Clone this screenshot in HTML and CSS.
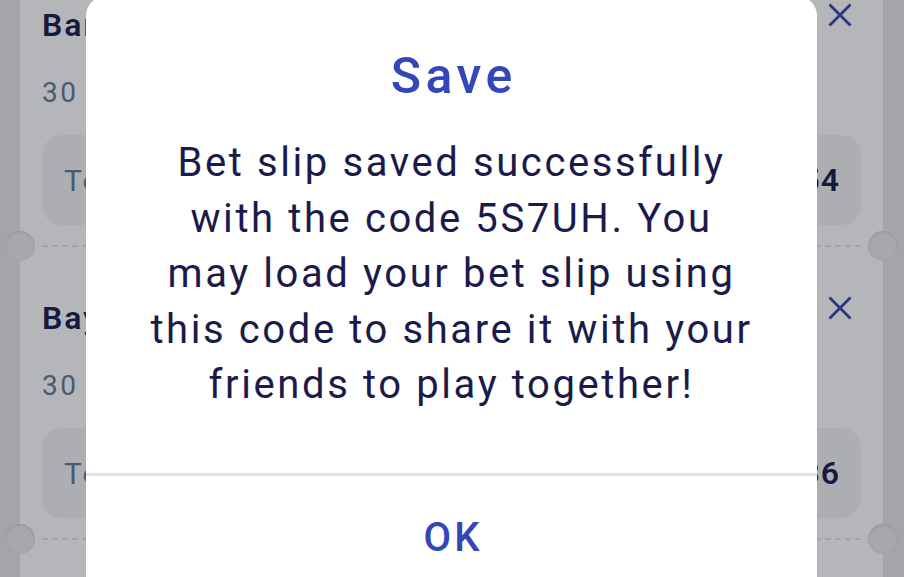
FILE: index.html
```html
<!DOCTYPE html>
<html>
<head>
<meta charset="utf-8">
<link rel="stylesheet" href="styles.css">
</head>
<body>
<div class="page">
  <div class="card">
    <div class="ticket">
      <div class="ticket-head">
        <div class="match">Barcelona vs Real Madrid</div>
        <svg class="close" viewBox="0 0 24 24" width="24" height="24"><path d="M1.5 1.5 L22.5 22.5 M22.5 1.5 L1.5 22.5" stroke="currentColor" stroke-width="2.8" fill="none"/></svg>
      </div>
      <div class="date">30 Mar 2024 21:00</div>
      <div class="odds-box"><span class="odds-label">Total odds</span><span class="odds-val">3.54</span></div>
      <div class="sep"></div>
    </div>
    <div class="ticket">
      <div class="ticket-head">
        <div class="match">Bayern vs Dortmund</div>
        <svg class="close" viewBox="0 0 24 24" width="24" height="24"><path d="M1.5 1.5 L22.5 22.5 M22.5 1.5 L1.5 22.5" stroke="currentColor" stroke-width="2.8" fill="none"/></svg>
      </div>
      <div class="date">30 Mar 2024 18:30</div>
      <div class="odds-box"><span class="odds-label">Total odds</span><span class="odds-val">5.36</span></div>
      <div class="sep"></div>
    </div>
  </div>
</div>
<div class="modal">
  <div class="modal-title">Save</div>
  <div class="modal-text">Bet slip saved successfully<br>with the code 5S7UH. You<br>may load your bet slip using<br>this code to share it with your<br>friends to play together!</div>
  <div class="modal-divider"></div>
  <div class="modal-btn">OK</div>
</div>
</body>
</html>
```
FILE: styles.css
```css
html, body {
  margin: 0;
  padding: 0;
  width: 904px;
  height: 577px;
  overflow: hidden;
  background: #a4a5a8;
  font-family: Roboto, "Noto Sans", sans-serif;
}
.page {
  display: flex;
  padding-left: 20px;
  padding-right: 21px;
}
.card {
  flex: 1;
  background: #b5b6b9;
  height: 577px;
}
.ticket {
  padding: 8px 22px 0 22px;
  position: relative;
}
.ticket-head {
  display: flex;
  justify-content: space-between;
  align-items: flex-start;
}
.match {
  font-size: 32px;
  line-height: 34px;
  font-weight: 600;
  letter-spacing: 2px;
  color: #17193f;
  white-space: nowrap;
}
.close {
  color: #2b3682;
  margin-top: -5px;
  margin-right: 9px;
  flex: none;
}
.date {
  margin-top: 36px;
  font-size: 28px;
  line-height: 30px;
  letter-spacing: 2.5px;
  color: #4b5a70;
}
.odds-box {
  margin-top: 27px;
  height: 90px;
  border-radius: 20px;
  background: #adaeb2;
  display: flex;
  align-items: center;
  justify-content: space-between;
  padding: 0 21px 0 22px;
}
.odds-label {
  font-size: 30px;
  letter-spacing: 2px;
  color: #4b5a70;
}
.odds-val {
  font-size: 32px;
  font-weight: 600;
  letter-spacing: 1px;
  color: #17193f;
}
.sep {
  margin: 20px 0 46px;
  height: 0;
  border-top: 2px dashed #a3a4a8;
  position: relative;
}
.sep::before, .sep::after {
  content: "";
  position: absolute;
  top: -16px;
  width: 30px;
  height: 30px;
  border-radius: 50%;
  background: #a7a8ab;
  box-shadow: inset 0 1px 3px rgba(0,0,0,0.12);
}
.sep::before { left: -37px; }
.sep::after { right: -37px; }

.modal {
  position: absolute;
  left: 86px;
  top: -4px;
  width: 731px;
  height: 640px;
  background: #ffffff;
  border-radius: 20px;
  text-align: center;
}
.modal-title {
  margin-top: 50px;
  font-size: 50px;
  line-height: 60px;
  font-weight: 500;
  letter-spacing: 4.5px;
  text-indent: 4.5px;
  color: #3347b8;
}
.modal-text {
  margin-top: 29px;
  font-size: 40px;
  line-height: 55.5px;
  letter-spacing: 2.6px;
  color: #1b1b4b;
}
.modal-divider {
  margin-top: 60px;
  height: 3px;
  background: #e0e1e8;
}
.modal-btn {
  padding-top: 38px;
  font-size: 40px;
  line-height: 48px;
  font-weight: 500;
  letter-spacing: 3px;
  text-indent: 3px;
  color: #3347b8;
}
```
